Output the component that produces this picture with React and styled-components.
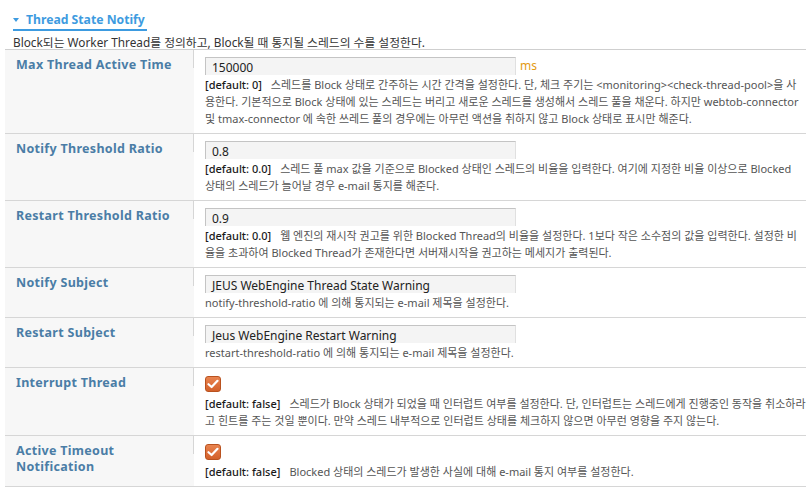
import styled, { createGlobalStyle } from "styled-components";

const Global = createGlobalStyle`
  body {
    margin: 0;
    background: #fff;
    font-family: "Noto Sans", "Noto Sans CJK KR", sans-serif;
  }
`;

const rows = [
  {
    label: "Max Thread Active Time",
    input: "150000",
    unit: "ms",
    def: "[default: 0]",
    lines: [
      "스레드를 Block 상태로 간주하는 시간 간격을 설정한다. 단, 체크 주기는 <monitoring><check-thread-pool>을 사",
      "용한다. 기본적으로 Block 상태에 있는 스레드는 버리고 새로운 스레드를 생성해서 스레드 풀을 채운다. 하지만 webtob-connector",
      "및 tmax-connector 에 속한 쓰레드 풀의 경우에는 아무런 액션을 취하지 않고 Block 상태로 표시만 해준다.",
    ],
  },
  {
    label: "Notify Threshold Ratio",
    input: "0.8",
    def: "[default: 0.0]",
    lines: [
      "스레드 풀 max 값을 기준으로 Blocked 상태인 스레드의 비율을 입력한다. 여기에 지정한 비율 이상으로 Blocked",
      "상태의 스레드가 늘어날 경우 e-mail 통지를 해준다.",
    ],
  },
  {
    label: "Restart Threshold Ratio",
    input: "0.9",
    def: "[default: 0.0]",
    lines: [
      "웹 엔진의 재시작 권고를 위한 Blocked Thread의 비율을 설정한다. 1보다 작은 소수점의 값을 입력한다. 설정한 비",
      "율을 초과하여 Blocked Thread가 존재한다면 서버재시작을 권고하는 메세지가 출력된다.",
    ],
  },
  {
    label: "Notify Subject",
    input: "JEUS WebEngine Thread State Warning",
    lines: ["notify-threshold-ratio 에 의해 통지되는 e-mail 제목을 설정한다."],
  },
  {
    label: "Restart Subject",
    input: "Jeus WebEngine Restart Warning",
    lines: ["restart-threshold-ratio 에 의해 통지되는 e-mail 제목을 설정한다."],
  },
  {
    label: "Interrupt Thread",
    check: true,
    def: "[default: false]",
    lines: [
      "스레드가 Block 상태가 되었을 때 인터럽트 여부를 설정한다. 단, 인터럽트는 스레드에게 진행중인 동작을 취소하라",
      "고 힌트를 주는 것일 뿐이다. 만약 스레드 내부적으로 인터럽트 상태를 체크하지 않으면 아무런 영향을 주지 않는다.",
    ],
  },
  {
    label: "Active Timeout Notification",
    check: true,
    def: "[default: false]",
    lines: ["Blocked 상태의 스레드가 발생한 사실에 대해 e-mail 통지 여부를 설정한다."],
  },
];

export default function App() {
  return (
    <>
      <Global />
      <Page>
        <Header>
          <Title>
            <Caret />
            Thread State Notify
          </Title>
          <Intro>Block되는 Worker Thread를 정의하고, Block될 때 통지될 스레드의 수를 설정한다.</Intro>
        </Header>
        <Table>
          {rows.map((r) => (
            <Row key={r.label}>
              <LabelCell>
                <Label>{r.label}</Label>
              </LabelCell>
              <ValueCell>
                {r.check ? (
                  <Check>
                    <svg width="12" height="10" viewBox="0 0 12 10">
                      <path d="M1.5 5.2 L4.6 8 L10.5 1.8" fill="none" stroke="#fff" strokeWidth="2.2" strokeLinecap="round" strokeLinejoin="round" />
                    </svg>
                  </Check>
                ) : (
                  <InputLine>
                    <Field>{r.input}</Field>
                    {r.unit && <Unit>{r.unit}</Unit>}
                  </InputLine>
                )}
                <Desc>
                  {r.lines.map((line, i) => (
                    <Line key={i}>
                      {i === 0 && r.def && <Default>{r.def}</Default>}
                      {line}
                    </Line>
                  ))}
                </Desc>
              </ValueCell>
            </Row>
          ))}
        </Table>
      </Page>
    </>
  );
}

const Page = styled.div`
  width: 801px;
  padding: 0 6px 0 5px;
`;

const Header = styled.div`
  padding: 5px 0 0 8px;
  height: 44px;
`;

const Title = styled.div`
  display: inline-flex;
  align-items: center;
  gap: 7px;
  padding: 0 2px 1px 0;
  border-bottom: 2px solid #3d9be0;
  color: #3d9be0;
  font-size: 12.2px;
  font-weight: 700;
  line-height: 16px;
`;

const Caret = styled.span`
  width: 0;
  height: 0;
  border-left: 3.5px solid transparent;
  border-right: 3.5px solid transparent;
  border-top: 4px solid #3d9be0;
`;

const Intro = styled.div`
  margin-top: 3px;
  font-size: 11.8px;
  line-height: 16px;
  color: #333;
`;

const Table = styled.div`
  border-top: 1px solid #cfcfcf;
`;

const Row = styled.div`
  display: grid;
  grid-template-columns: 189px 1fr;
  border-bottom: 1px solid #d6d6d6;
`;

const LabelCell = styled.div`
  position: relative;
  background: #f7f7f7;
  padding: 7px 20px 6px 11px;
  &::after {
    content: "";
    position: absolute;
    top: 0;
    right: 0;
    width: 1px;
    height: 18px;
    background: #d6d6d6;
  }
`;

const Label = styled.div`
  color: #4a7da6;
  font-size: 12.5px;
  font-weight: 700;
  line-height: 16px;
  letter-spacing: 0.3px;
`;

const ValueCell = styled.div`
  padding: 7px 6px 6px 11px;
`;

const InputLine = styled.div`
  display: flex;
  align-items: center;
  gap: 4px;
`;

const Field = styled.div`
  width: 311px;
  height: 18px;
  box-sizing: border-box;
  padding: 1px 0 0 6px;
  overflow: hidden;
  background: #f4f4f4;
  border-top: 1px solid #c4c4c4;
  border-left: 1px solid #c4c4c4;
  border-right: 1px solid #e0e0e0;
  color: #222;
  font-size: 12px;
  line-height: 17px;
  white-space: nowrap;
`;

const Unit = styled.span`
  color: #e39a12;
  font-size: 12px;
  line-height: 16px;
`;

const Check = styled.div`
  display: flex;
  align-items: center;
  justify-content: center;
  width: 16px;
  height: 16px;
  margin: 1px 0 3px;
  box-sizing: border-box;
  border-radius: 3px;
  border: 1px solid #b9521f;
  background: linear-gradient(#e98450, #d3602a);
`;

const Desc = styled.div`
  margin-top: 1px;
  color: #555;
  font-size: 11px;
`;

const Line = styled.div`
  height: 17px;
  line-height: 17px;
  white-space: nowrap;
`;

const Default = styled.span`
  color: #1a1a1a;
  font-size: 11px;
  font-weight: 500;
  margin-right: 9px;
`;
